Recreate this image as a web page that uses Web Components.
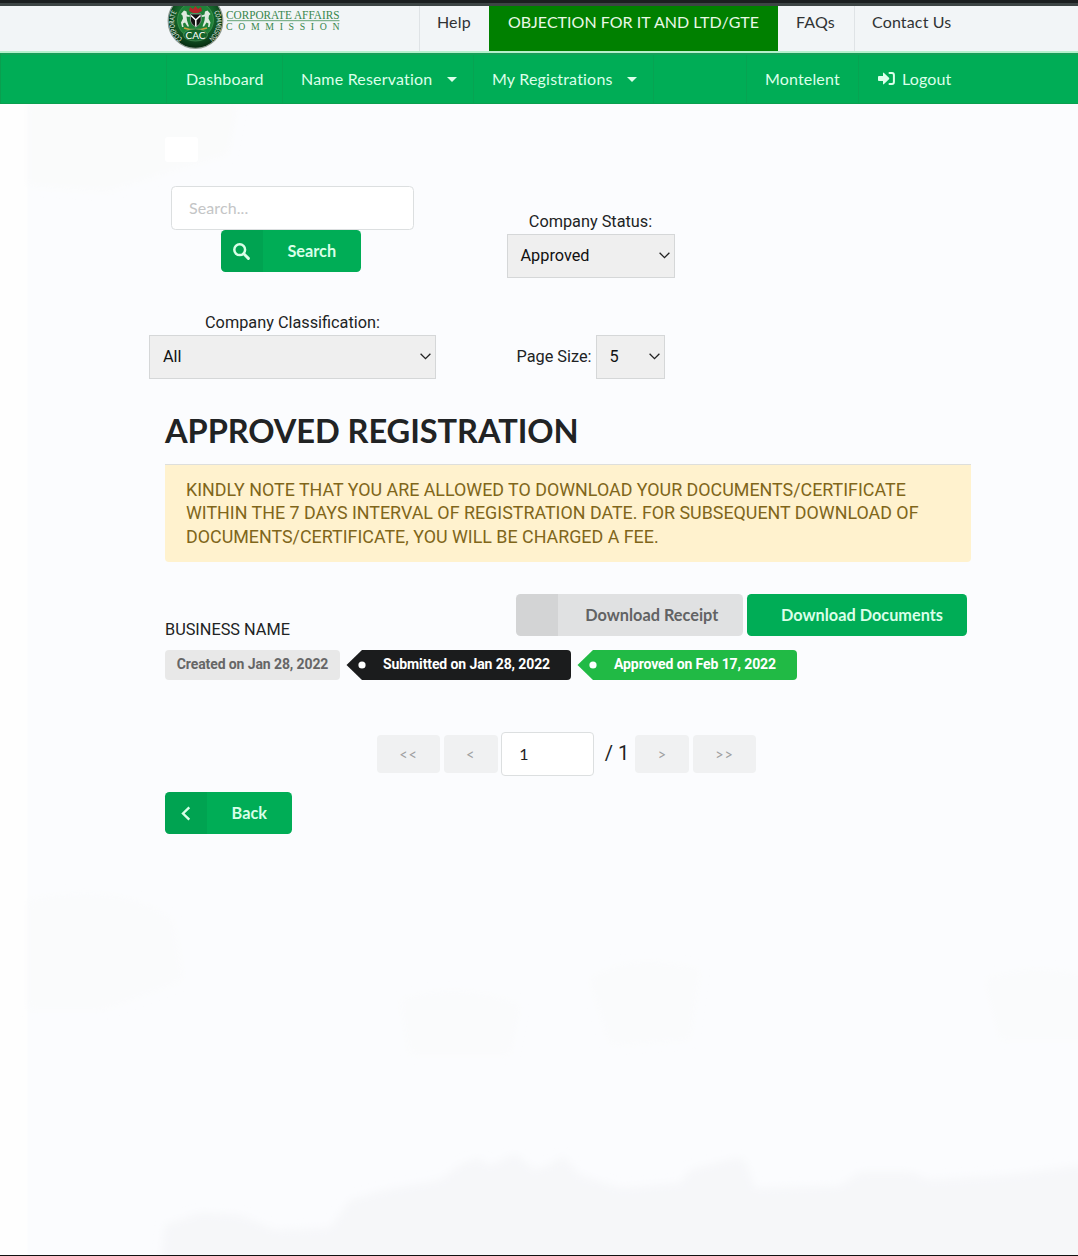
<!DOCTYPE html>
<html lang="en">
<head>
<meta charset="utf-8">
<title>Corporate Affairs Commission</title>
<style>
    html, body { margin: 0; height: 100%; }
    body {
        overflow: hidden;
        font-family: Roboto, sans-serif;
        font-size: 16.3px;
        color: #212324;
        background: #fbfcfe;
    }
</style>
</head>
<body>
<registration-page></registration-page>

<script>
class CacLogo extends HTMLElement {
    constructor() {
        super();
        this.attachShadow({mode: 'open'}).innerHTML = `
        <style>
            :host { display: block; width: 176px; height: 45px; }
            svg { display: block; }
        </style>
        <svg width="176" height="45" viewBox="166 6 176 45">
            <defs>
                <radialGradient id="ball" cx="50%" cy="42%" r="58%">
                    <stop offset="0" stop-color="#248a3c"/>
                    <stop offset=".6" stop-color="#14632a"/>
                    <stop offset="1" stop-color="#06290f"/>
                </radialGradient>
                <path id="arcLeft" d="M182.400 38.500A20.500 20.500 0 0 1 177 12"/>
                <path id="arcRight" d="M214 12A20.500 20.500 0 0 1 208.600 38.500"/>
            </defs>
            <circle cx="195.5" cy="21" r="27.3" fill="url(#ball)" stroke="#8d9a90" stroke-width="1.2"/>
            <circle cx="195.5" cy="20" r="18" fill="#1f8139" stroke="#4da05c" stroke-width=".6"/>
            <g font-family="Lato, sans-serif" font-size="7" fill="#f4fbf4">
                <text textLength="29" lengthAdjust="spacingAndGlyphs"><textPath href="#arcLeft" textLength="29" lengthAdjust="spacingAndGlyphs">CORPORATE</textPath></text>
                <text textLength="29" lengthAdjust="spacingAndGlyphs"><textPath href="#arcRight" textLength="29" lengthAdjust="spacingAndGlyphs">COMMISSION</textPath></text>
            </g>
            <path d="M190 7l3 2 2.500-3 2.500 3 3-2 1 4-4 2h-5l-4-2z" fill="#b3262a"/>
            <path d="M190.500 14h10.500v7q-1 4-5.200 6-4.300-2-5.300-6z" fill="#111" stroke="#ddd" stroke-width=".5"/>
            <path d="M191 15.500l4.800 4.500 4.700-4.500M195.800 20v6.500" fill="none" stroke="#fff" stroke-width="1.500"/>
            <g fill="#dfeadf">
                <path d="M181 14l3-3.500 2.500 1 .5 3 3 1-.5 1.500-3-.5.500 4 2 6h-1.500l-2.500-4-2 1 .500 3.500h-1.500l-1-4.500 2-4-.5-3z"/>
                <path d="M210.500 14l-3-3.500-2.500 1-.5 3-3 1 .5 1.500 3-.5-.5 4-2 6h1.500l2.500-4 2 1-.5 3.500h1.500l1-4.500-2-4 .5-3z"/>
            </g>
            <path d="M184 28q11 4 23 0" fill="none" stroke="#c8a23b" stroke-width="1.800"/>
            <ellipse cx="195.500" cy="35" rx="12" ry="6" fill="#14632a" stroke="#70a879" stroke-width=".5"/>
            <text x="195.500" y="38.600" text-anchor="middle" font-family="Lato, sans-serif" font-size="10" fill="#fff">CAC</text>
            <g font-family="'Liberation Serif', serif" fill="#37854b">
                <text x="226" y="18.500" font-size="11.500" textLength="113.500" lengthAdjust="spacingAndGlyphs">CORPORATE AFFAIRS</text>
                <text x="226" y="29.800" font-size="9.800" textLength="113.500">COMMISSION</text>
            </g>
            <path d="M227 20.700h112.500" stroke="#62a374"/>
        </svg>`;
    }
}

class MenuItem extends HTMLElement {
    constructor() {
        super();
        this.attachShadow({mode: 'open'}).innerHTML = `
        <style>
            :host {
                display: flex;
                align-items: center;
                box-sizing: border-box;
                border-left: 1px solid var(--item-line, #dfe3e6);
                padding: 0 0 1px 18px;
                font: 16px Lato, sans-serif;
                letter-spacing: .15px;
                white-space: nowrap;
            }
            :host([active]) { background: #008000; color: #e9f8e6; border-color: #008000; letter-spacing: .03px; }
            :host([plain]) { border-color: transparent; }
            .caret {
                display: none;
                margin: 1px 0 0 14px;
                border: 5px solid transparent;
                border-top-color: currentColor;
                border-bottom: 0;
            }
            :host([dropdown]) { letter-spacing: .2px; }
            :host([dropdown]) .caret { display: block; }
        </style>
        <slot></slot><i class="caret"></i>`;
    }
}

class TopBar extends HTMLElement {
    constructor() {
        super();
        this.attachShadow({mode: 'open'}).innerHTML = `
        <style>
            :host {
                display: grid;
                grid-template-columns: 253px 70px 289px 76px 1fr;
                box-sizing: border-box;
                height: 53px;
                padding-left: 166px;
                border-top: 3px solid #1b1f20;
                border-bottom: 2px solid #b5f0cc;
                background: #f2f5f7;
                box-shadow: inset 0 3px #3d4545;
                color: #303334;
            }
            cac-logo { margin: 3px 0 0; }
            menu-item { margin: 3px 0 0; height: 44.5px; padding-bottom: 14px; padding-left: 17px; }
        </style>
        <cac-logo></cac-logo>
        <menu-item>Help</menu-item>
        <menu-item active style="padding-left:18px">OBJECTION FOR IT AND LTD/GTE</menu-item>
        <menu-item plain>FAQs</menu-item>
        <menu-item>Contact Us</menu-item>`;
    }
}

class NavBar extends HTMLElement {
    constructor() {
        super();
        this.attachShadow({mode: 'open'}).innerHTML = `
        <style>
            :host {
                display: grid;
                grid-template-columns: 116px 191px 180px 93px 112px 1fr;
                box-sizing: border-box;
                height: 51px;
                padding-left: 165px;
                border: 1px solid #0a9f4f;
                border-top: 2px solid #16a058;
                border-right: 0;
                background: #00ad56;
                color: #dcffea;
                --item-line: #06a452;
            }
            svg { margin-right: 7px; }
        </style>
        <menu-item style="padding-left:19px">Dashboard</menu-item>
        <menu-item dropdown>Name Reservation</menu-item>
        <menu-item dropdown>My Registrations</menu-item>
        <menu-item></menu-item>
        <menu-item>Montelent</menu-item>
        <menu-item style="padding-left:19px">
            <svg width="17" height="13" viewBox="0 0 17 13" fill="currentColor">
                <path d="M0 4.900q0-.9.900-.9H5V1.200q0-1.200 1-.3l5 4.800q.7.800 0 1.600l-5 4.800q-1 .9-1-.3V9H.9Q0 9 0 8.100z"/>
                <path d="M11.500 1.100H14q1.900 0 1.900 1.900v7q0 1.900-1.900 1.900h-2.500" fill="none" stroke="currentColor" stroke-width="2" stroke-linecap="round"/>
            </svg>Logout
        </menu-item>`;
    }
}

class IconButton extends HTMLElement {
    constructor() {
        super();
        this.attachShadow({mode: 'open'}).innerHTML = `
        <style>
            :host { display: block; height: 42px; color: #d9ffe8; }
            button {
                display: flex;
                width: 100%;
                height: 100%;
                padding: 0;
                border: 0;
                border-radius: 4.500px;
                overflow: hidden;
                background: #00ad56;
                color: inherit;
                font: bold 16.300px Lato, sans-serif;
            }
            .icon {
                display: flex;
                align-items: center;
                justify-content: center;
                width: 41.500px;
                height: 100%;
                background: rgba(0, 0, 0, .055);
            }
            .text { flex: 1; align-self: center; text-align: center; padding-bottom: 2px; }
            :host([noicon]) .icon { background: none; width: 10px; }
            :host([disabled]) { color: #626364; }
            :host([disabled]) button { background: #e0e1e2; }
            :host([disabled]) .text { padding-left: 3px; }
        </style>
        <button><span class="icon"><slot name="icon"></slot></span><span class="text"><slot></slot></span></button>`;
    }
}

class SelectBox extends HTMLElement {
    constructor() {
        super();
        this.attachShadow({mode: 'open'}).innerHTML = `
        <style>
            :host {
                display: flex;
                flex: none;
                align-items: center;
                justify-content: space-between;
                box-sizing: border-box;
                height: 44px;
                padding: 0 4px 1px 13px;
                border: 1px solid #d5d7d8;
                background: #efefef;
                color: #111;
            }
        </style>
        <slot></slot>
        <svg width="11" height="7" viewBox="0 0 11 7" fill="none" stroke="#222" stroke-width="1.300"><path d="M.6.700l4.900 4.900L10.400.700"/></svg>`;
    }
}

class FilterForm extends HTMLElement {
    constructor() {
        super();
        this.attachShadow({mode: 'open'}).innerHTML = `
        <style>
            :host {
                display: grid;
                grid-template: 92px 67px / 287px 287px;
                gap: 34px 11px;
                margin: 24px 0 0 -16px;
            }
            .field { display: flex; flex-direction: column; align-items: center; justify-content: flex-end; }
            .search { justify-content: flex-start; }
            .inline { flex-direction: row; align-items: flex-end; justify-content: center; }
            label { line-height: 25px; }
            .inline label { line-height: 44px; margin-right: 4px; }
            input {
                box-sizing: border-box;
                width: 243px;
                height: 44px;
                padding: 0 17px 2px;
                border: 1px solid #dcdfe0;
                border-radius: 4.500px;
                background: #fff;
                font: 16px Lato, sans-serif;
                letter-spacing: .1px;
            }
            input::placeholder { color: #c4c5c6; opacity: 1; }
            icon-button { width: 140px; margin-left: -3px; }
        </style>
        <div class="field search">
            <input placeholder="Search...">
            <icon-button>
                <svg slot="icon" width="17" height="17" viewBox="0 0 17 17" fill="none" stroke="currentColor">
                    <circle cx="6.700" cy="6.700" r="5.400" stroke-width="2.500"/>
                    <path d="M10.800 10.800l4.600 4.600" stroke-width="2.900" stroke-linecap="round"/>
                </svg>Search
            </icon-button>
        </div>
        <div class="field">
            <label>Company Status:</label>
            <select-box style="width:168px">Approved</select-box>
        </div>
        <div class="field">
            <label>Company Classification:</label>
            <select-box style="width:287px">All</select-box>
        </div>
        <div class="field inline">
            <label>Page Size:</label>
            <select-box style="width:69px">5</select-box>
        </div>`;
    }
}

class TagLabel extends HTMLElement {
    constructor() {
        super();
        this.attachShadow({mode: 'open'}).innerHTML = `
        <style>
            :host {
                --tag: #e8e8e8;
                display: flex;
                box-sizing: border-box;
                height: 30px;
                color: #666;
                font-size: 14px;
                font-weight: bold;
                letter-spacing: -.1px;
                line-height: 28px;
                white-space: nowrap;
            }
            .body { flex: 1; border-radius: 4px; background: var(--tag); text-align: center; }
            svg { display: none; flex: none; z-index: 1; margin: 0 -4px 0 -1px; }
            :host([pointed]) { color: #fff; }
            :host([pointed]) svg { display: block; }
            :host([pointed]) .body { border-radius: 0 4px 4px 0; }
        </style>
        <svg width="20" height="30" viewBox="0 0 20 30"><path d="M20 0h-4L.500 15 16 30h4z" fill="var(--tag)"/><circle cx="16" cy="15" r="3.600" fill="#fff"/></svg>
        <div class="body"><slot></slot></div>`;
    }
    connectedCallback() {
        if (this.hasAttribute('color')) this.style.setProperty('--tag', this.getAttribute('color'));
    }
}

class PageControls extends HTMLElement {
    constructor() {
        super();
        this.attachShadow({mode: 'open'}).innerHTML = `
        <style>
            :host {
                display: grid;
                grid-template-columns: 63px 54px 93px 34px 54px 63px;
                column-gap: 3.600px;
                align-items: center;
                height: 44px;
                margin: 52px 0 0 212px;
            }
            button {
                height: 38px;
                padding: 0;
                border: 0;
                border-radius: 4px;
                background: #f0f1f2;
                color: #9fa0a1;
                font: 14.500px Lato, sans-serif;
                letter-spacing: .9px;
            }
            input {
                box-sizing: border-box;
                width: 93px;
                height: 44px;
                padding: 0 17px 2px;
                border: 1px solid #dcdfe0;
                border-radius: 4px;
                color: #222;
                font: 16px Lato, sans-serif;
            }
            span { padding: 0 0 2px 7px; font-size: 20px; white-space: nowrap; }
        </style>
        <button>&lt;&lt;</button><button>&lt;</button>
        <input value="1"><span>/ 1</span>
        <button>&gt;</button><button>&gt;&gt;</button>`;
    }
}

class RegistrationPage extends HTMLElement {
    constructor() {
        super();
        this.attachShadow({mode: 'open'}).innerHTML = `
        <style>
            :host {
                display: block;
                position: relative;
                isolation: isolate;
                box-sizing: border-box;
                height: 1256px;
                border-bottom: 1px solid #111;
                background: linear-gradient(90deg, #fefefe 27px, #fbfcfe 28px);
            }
            .scene { position: absolute; left: 0; top: 104px; z-index: -1; }
            main { padding: 33px 107px 0 165px; }
            .blank { width: 33px; height: 25px; border-radius: 3px; background: #fff; }
            h1 {
                margin: 31px 0 12px;
                font: bold 32.600px/42px Lato, sans-serif;
                letter-spacing: -.07px;
                white-space: nowrap;
            }
            .notice {
                box-sizing: border-box;
                height: 98px;
                padding: 12.500px 21px;
                border-top: 1px solid #dedfdc;
                border-radius: 0 0 4px 4px;
                background: #fff2ce;
                color: #80661a;
                font-size: 17.860px;
                line-height: 23.500px;
                white-space: nowrap;
            }
            .record { display: flex; gap: 4px; margin: 32px 4px 0 0; height: 42px; }
            .record p { flex: 1; margin: 26px 0 0; line-height: 20px; }
            .tags { display: flex; gap: 7px; margin-top: 14px; }
            .back { width: 127px; margin-top: 16px; }
        </style>
        <svg class="scene" width="1078" height="1151" viewBox="0 104 1078 1151">
            <defs><filter id="soft" x="-5%" y="-10%" width="110%" height="120%"><feGaussianBlur stdDeviation="4"/></filter></defs>
            <g filter="url(#soft)">
                <path d="M28 104h210l-10 50-50 15-70 22-80-5z" fill="#fafbfb"/>
                <path d="M28 900q90-20 145 20l10 60-80 30H28z" fill="#fafbfc"/>
                <path d="M590 980q40-30 110-10l-10 70-80 5zM400 1000q60-20 120 5l-10 50h-100zM985 980q50-20 110 0v60H1000z" fill="#fafbfc"/>
                <path d="M160 1270L165 1225 200 1213 240 1215 275 1230 330 1228 350 1200 385 1190 440 1180 460 1165 478 1158 490 1166 515 1154 535 1170 550 1165 563 1156 580 1175 620 1188 680 1183 690 1170 735 1158 745 1160 755 1188 840 1186 860 1172 910 1172 930 1180 1010 1175 1100 1163V1270z" fill="#f6f7f9"/>
            </g>
        </svg>
        <top-bar></top-bar>
        <nav-bar></nav-bar>
        <main>
            <div class="blank"></div>
            <filter-form></filter-form>
            <h1>APPROVED REGISTRATION</h1>
            <div class="notice">KINDLY NOTE THAT YOU ARE ALLOWED TO DOWNLOAD YOUR DOCUMENTS/CERTIFICATE<br>WITHIN THE 7 DAYS INTERVAL OF REGISTRATION DATE. FOR SUBSEQUENT DOWNLOAD OF<br>DOCUMENTS/CERTIFICATE, YOU WILL BE CHARGED A FEE.</div>
            <div class="record">
                <p>BUSINESS NAME</p>
                <icon-button disabled style="width:227px">Download Receipt</icon-button>
                <icon-button noicon style="width:220px">Download Documents</icon-button>
            </div>
            <div class="tags">
                <tag-label style="width:175px">Created on Jan 28, 2022</tag-label>
                <tag-label pointed color="#1b1c1d" style="width:224px">Submitted on Jan 28, 2022</tag-label>
                <tag-label pointed color="#21ba45" style="width:219px">Approved on Feb 17, 2022</tag-label>
            </div>
            <page-controls></page-controls>
            <icon-button class="back">
                <svg slot="icon" width="10" height="15" viewBox="0 0 10 15" fill="none" stroke="currentColor" stroke-width="2.400"><path d="M8.300 1.300L2 7.500l6.300 6.200"/></svg>Back
            </icon-button>
        </main>`;
    }
}

customElements.define('cac-logo', CacLogo);
customElements.define('menu-item', MenuItem);
customElements.define('top-bar', TopBar);
customElements.define('nav-bar', NavBar);
customElements.define('icon-button', IconButton);
customElements.define('select-box', SelectBox);
customElements.define('filter-form', FilterForm);
customElements.define('tag-label', TagLabel);
customElements.define('page-controls', PageControls);
customElements.define('registration-page', RegistrationPage);
</script>
</body>
</html>
